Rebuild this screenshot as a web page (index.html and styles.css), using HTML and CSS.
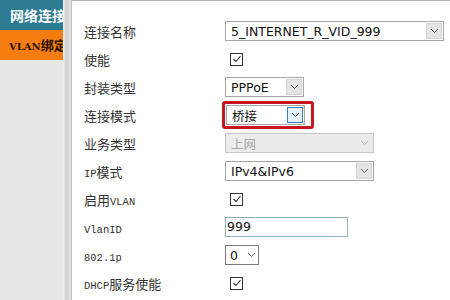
FILE: index.html
```html
<!DOCTYPE html>
<html lang="zh-CN">
<head>
    <meta charset="UTF-8">
    <title>VLAN绑定</title>
    <link rel="stylesheet" href="styles.css">
</head>
<body>
    <div class="page">
        <div class="side">
            <div class="tab tab-net">网络连接</div>
            <div class="tab tab-vlan"><span class="en">VLAN</span>绑定</div>
        </div>
        <div class="edge"></div>

        <div class="main">
            <div class="row">
                <div class="label">连接名称</div>
                <div class="sel w-name"><span class="val">5_INTERNET_R_VID_999</span><span class="arr"><svg width="9" height="6" viewBox="0 0 9 6"><path d="M1 1l3.5 3.5L8 1" fill="none" stroke="#555" stroke-width="1"/></svg></span></div>
            </div>
            <div class="row">
                <div class="label">使能</div>
                <span class="chk"><svg width="10" height="10" viewBox="0 0 10 10"><path d="M1.5 5l2.5 2.5L8.5 2" fill="none" stroke="#333" stroke-width="1.1"/></svg></span>
            </div>
            <div class="row">
                <div class="label">封装类型</div>
                <div class="sel w-short"><span class="val">PPPoE</span><span class="arr"><svg width="9" height="6" viewBox="0 0 9 6"><path d="M1 1l3.5 3.5L8 1" fill="none" stroke="#555" stroke-width="1"/></svg></span></div>
            </div>
            <div class="row">
                <div class="label">连接模式</div>
                <div class="mark">
                    <div class="sel w-short"><span class="val">桥接</span><span class="arr arr-hover"><svg width="9" height="6" viewBox="0 0 9 6"><path d="M1 1l3.5 3.5L8 1" fill="none" stroke="#333" stroke-width="1"/></svg></span></div>
                </div>
            </div>
            <div class="row">
                <div class="label">业务类型</div>
                <div class="sel w-mid off"><span class="val">上网</span><span class="arr"><svg width="9" height="6" viewBox="0 0 9 6"><path d="M1 1l3.5 3.5L8 1" fill="none" stroke="#bbb" stroke-width="1"/></svg></span></div>
            </div>
            <div class="row">
                <div class="label"><span class="en">IP</span>模式</div>
                <div class="sel w-mid"><span class="val">IPv4&amp;IPv6</span><span class="arr"><svg width="9" height="6" viewBox="0 0 9 6"><path d="M1 1l3.5 3.5L8 1" fill="none" stroke="#555" stroke-width="1"/></svg></span></div>
            </div>
            <div class="row">
                <div class="label">启用<span class="en">VLAN</span></div>
                <span class="chk"><svg width="10" height="10" viewBox="0 0 10 10"><path d="M1.5 5l2.5 2.5L8.5 2" fill="none" stroke="#333" stroke-width="1.1"/></svg></span>
            </div>
            <div class="row">
                <div class="label"><span class="en">VlanID</span></div>
                <div class="input">999</div>
            </div>
            <div class="row">
                <div class="label"><span class="en">802.1p</span></div>
                <div class="sel w-tiny plain"><span class="val">0</span><span class="arr"><svg width="9" height="6" viewBox="0 0 9 6"><path d="M1 1l3.5 3.5L8 1" fill="none" stroke="#666" stroke-width="1"/></svg></span></div>
            </div>
            <div class="row">
                <div class="label"><span class="en">DHCP</span>服务使能</div>
                <span class="chk"><svg width="10" height="10" viewBox="0 0 10 10"><path d="M1.5 5l2.5 2.5L8.5 2" fill="none" stroke="#333" stroke-width="1.1"/></svg></span>
            </div>
            <div class="row">
                <div class="label faint">端口绑定</div>
                <div class="opts">
                    <span class="opt"><span class="chk"></span>LAN1</span>
                    <span class="opt"><span class="chk"></span>LAN2</span>
                    <span class="opt"><span class="chk"></span>LAN3</span>
                    <span class="opt"><span class="chk"></span>LAN4</span>
                </div>
            </div>
        </div>
    </div>
</body>
</html>
```

FILE: styles.css
```css
body {
    margin: 0;
    background: #fff;
    font-family: "Noto Sans CJK SC", sans-serif;
    color: #333;
}
.page {
    display: flex;
    height: 300px;
    overflow: hidden;
}
.side {
    width: 63px;
    flex: none;
    background: #e9e7e4;
    overflow: hidden;
}
.tab {
    height: 30px;
    line-height: 30px;
    padding-left: 10px;
    white-space: nowrap;
    font-weight: bold;
    font-size: 14px;
}
.tab-net {
    background: #2d7b93;
    color: #fff;
}
.tab-vlan {
    background: #f57d10;
    color: #2a1200;
    padding-left: 9px;
    font-size: 13px;
}
.tab-vlan .en {
    font-family: "DejaVu Serif", serif;
    font-size: 10px;
}
.edge {
    width: 9px;
    flex: none;
    background: linear-gradient(to right, #f2f1ef, #d2d0cd 40%, #e4e3e1 80%, #b8b8b8);
}
.main {
    flex: 1;
    border-top: 1px solid #b0b0b0;
    padding: 16px 0 0 12px;
}
.row {
    display: flex;
    align-items: center;
    height: 28px;
}
.label {
    width: 141px;
    flex: none;
    font-size: 13px;
    color: #333;
    white-space: nowrap;
}
.label .en {
    font-family: "Liberation Mono", monospace;
    font-size: 10.5px;
}
.faint {
    color: #ccc;
}
.sel {
    display: flex;
    align-items: center;
    height: 20px;
    box-sizing: border-box;
    border: 1px solid #a6a6a6;
    background: #fff;
    font-family: "DejaVu Sans", "Noto Sans CJK SC", sans-serif;
    font-size: 12.5px;
    color: #111;
}
.sel .val {
    flex: 1;
    padding-left: 5px;
    white-space: nowrap;
}
.sel .arr {
    width: 16px;
    height: 16px;
    margin-right: 1px;
    display: flex;
    align-items: center;
    justify-content: center;
    background: #e4e4e4;
    border: 1px solid #d4d4d4;
    box-sizing: border-box;
}
.arr-hover {
    background: #e5f1fb !important;
    border-color: #3c7fb1 !important;
}
.w-name { width: 219px; }
.w-short { width: 79px; }
.w-mid { width: 149px; }
.w-tiny { width: 34px; }
.off {
    background: #ececec;
    border-color: #c6c6c6;
    color: #a8a8a8;
}
.off .arr {
    background: #ececec;
    border-color: #ececec;
}
.plain {
    border-color: #7a7a7a;
}
.plain .val {
    padding-left: 4px;
}
.plain .arr {
    background: none;
    border: none;
    width: 12px;
}
.mark {
    margin-left: -3px;
    padding: 1px 6px 1px 1px;
    border: 3px solid #c8161e;
    border-radius: 3px;
}
.chk {
    width: 13px;
    height: 13px;
    box-sizing: border-box;
    border: 1px solid #333;
    background: #fff;
    display: inline-flex;
    align-items: center;
    justify-content: center;
    margin-left: 5px;
}
.input {
    width: 123px;
    height: 20px;
    box-sizing: border-box;
    border: 1px solid #8fb1c8;
    padding-left: 1px;
    line-height: 18px;
    font-family: "DejaVu Sans", sans-serif;
    font-size: 12.5px;
    color: #111;
}
.opts {
    display: flex;
    gap: 30px;
    font-size: 12px;
    color: #ccc;
}
.opt {
    display: flex;
    align-items: center;
    gap: 4px;
}
.opt .chk {
    margin-left: 3px;
}
```
